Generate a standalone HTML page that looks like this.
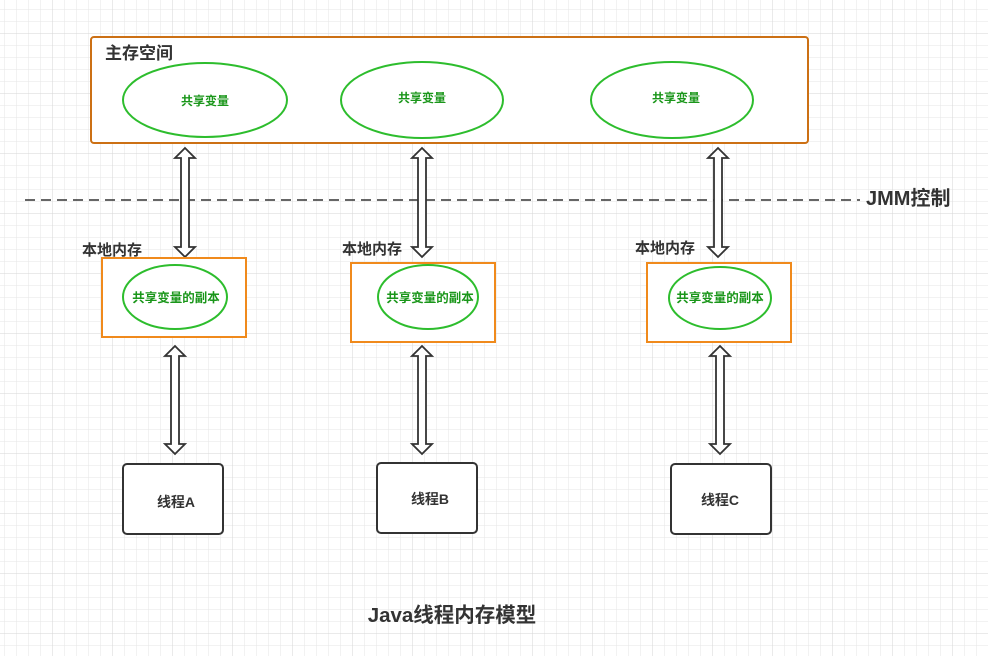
<!DOCTYPE html>
<html><head><meta charset="utf-8"><style>
html,body{margin:0;padding:0;background:#fff}
svg{display:block}
text{font-family:"Liberation Sans","Noto Sans CJK SC",sans-serif;font-weight:bold}
</style></head><body>
<svg width="988" height="656" viewBox="0 0 988 656" xmlns="http://www.w3.org/2000/svg">
<defs>
<pattern id="minor" x="4" y="9" width="12" height="12" patternUnits="userSpaceOnUse">
<path d="M0 0H12M0 0V12" stroke="#e6e6e6" stroke-width="1" fill="none"/>
</pattern>
<pattern id="major" x="52" y="33" width="60" height="60" patternUnits="userSpaceOnUse">
<path d="M0 0H60M0 0V60" stroke="#d6d6d6" stroke-width="1" fill="none"/>
</pattern>
</defs>
<rect width="988" height="656" fill="url(#minor)"/>
<rect width="988" height="656" fill="url(#major)"/>

<rect x="91" y="37" width="717" height="106" rx="3" fill="#fff" stroke="#cc7014" stroke-width="2"/>
<text x="105" y="59" font-size="17" fill="#333">主存空间</text>
<g fill="#fff" stroke="#2dbd2d" stroke-width="2">
<ellipse cx="205" cy="100" rx="82" ry="37"/>
<ellipse cx="422" cy="100" rx="81" ry="38"/>
<ellipse cx="672" cy="100" rx="81" ry="38"/>
</g>
<g font-size="12" fill="#1a961a" text-anchor="middle">
<text x="205" y="105">共享变量</text>
<text x="422" y="102">共享变量</text>
<text x="676" y="102">共享变量</text>
</g>

<line x1="25" y1="200" x2="860" y2="200" stroke="#333" stroke-width="1.5" stroke-dasharray="10,6"/>
<text x="866" y="205" font-size="20" fill="#333">JMM控制</text>

<g fill="#fff" stroke="#333" stroke-width="1.8">
<path d="M185 148L195 158L189 158L189 247L195 247L185 257L175 247L181 247L181 158L175 158Z"/>
<path d="M422 148L432 158L426 158L426 247L432 247L422 257L412 247L418 247L418 158L412 158Z"/>
<path d="M718 148L728 158L722 158L722 247L728 247L718 257L708 247L714 247L714 158L708 158Z"/>
<path d="M175 346L185 356L179 356L179 444L185 444L175 454L165 444L171 444L171 356L165 356Z"/>
<path d="M422 346L432 356L426 356L426 444L432 444L422 454L412 444L418 444L418 356L412 356Z"/>
<path d="M720 346L730 356L724 356L724 444L730 444L720 454L710 444L716 444L716 356L710 356Z"/>
</g>

<g font-size="15" fill="#333">
<text x="82" y="255">本地内存</text>
<text x="342" y="254">本地内存</text>
<text x="635" y="253">本地内存</text>
</g>
<g fill="#fff" stroke="#f08a1c" stroke-width="2">
<rect x="102" y="258" width="144" height="79"/>
<rect x="351" y="263" width="144" height="79"/>
<rect x="647" y="263" width="144" height="79"/>
</g>
<g fill="#fff" stroke="#2dbd2d" stroke-width="2">
<ellipse cx="175" cy="297" rx="52" ry="32"/>
<ellipse cx="428" cy="297" rx="50" ry="32"/>
<ellipse cx="720" cy="298" rx="51" ry="31"/>
</g>
<g font-size="12.5" fill="#1a961a" text-anchor="middle">
<text x="176" y="302">共享变量的副本</text>
<text x="430" y="302">共享变量的副本</text>
<text x="720" y="302">共享变量的副本</text>
</g>

<g fill="#fff" stroke="#333" stroke-width="2">
<rect x="123" y="464" width="100" height="70" rx="4"/>
<rect x="377" y="463" width="100" height="70" rx="4"/>
<rect x="671" y="464" width="100" height="70" rx="4"/>
</g>
<g font-size="14" fill="#333" text-anchor="middle">
<text x="176" y="507">线程A</text>
<text x="430" y="504">线程B</text>
<text x="720" y="505">线程C</text>
</g>

<text x="452" y="622" font-size="20.5" fill="#333" text-anchor="middle">Java线程内存模型</text>
</svg>
</body></html>
